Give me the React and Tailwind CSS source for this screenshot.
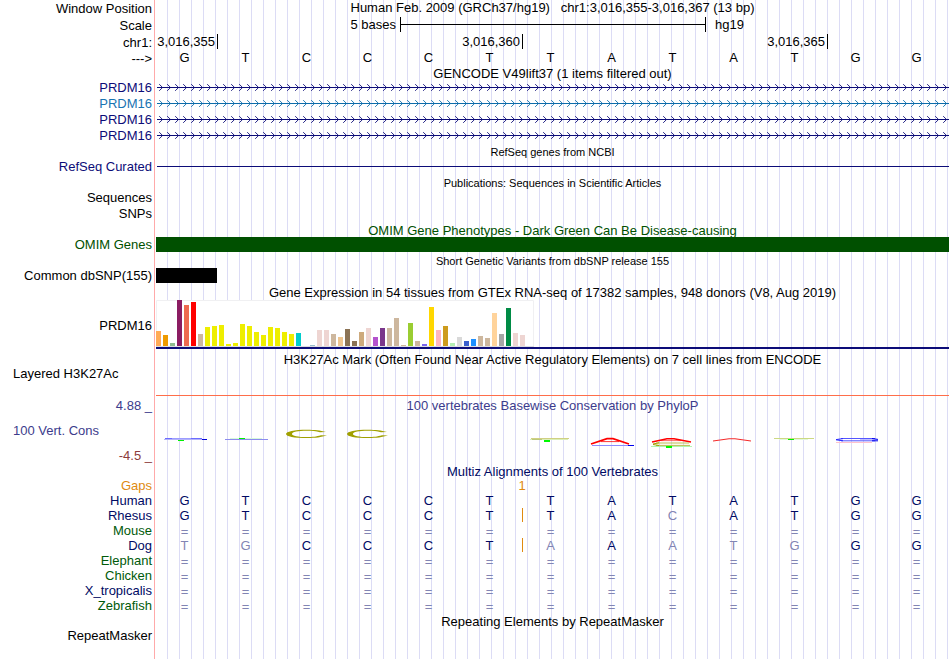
import React from "react";

const GRID =
  "bg-[linear-gradient(to_right,transparent_11px,#dcdcf5_11px)] bg-size-[12px_100%]";

function Row({ label, labelClass = "", className = "h-[15px]", children }) {
  return (
    <div className={`flex ${className}`}>
      <div
        className={`flex w-[155px] shrink-0 items-center justify-end border-r border-[#ffaaaa] pr-[2px] whitespace-pre ${labelClass}`}
      >
        {label}
      </div>
      <div className={`mx-px min-w-0 flex-1 ${GRID}`}>{children}</div>
    </div>
  );
}

function Title({ children, className = "", height = "h-4", small = false, label }) {
  return (
    <Row className={height} label={label}>
      <h2
        className={`flex h-full items-center justify-center whitespace-pre ${
          small ? "pt-[2px] text-[11px]" : ""
        } ${className}`}
      >
        {children}
      </h2>
    </Row>
  );
}

function Bases({ seq, className = "", match = "", insertAt = -1 }) {
  return (
    <div className={`grid h-full grid-cols-13 ${className}`}>
      {seq.split("").map((base, i) => {
        const dim = match && base !== match[i];
        return (
          <div key={i} className="flex items-center">
            {i === insertAt && (
              <span className="-mr-px h-[14px] w-px self-start bg-[#e08a10]" />
            )}
            <span
              className={`flex-1 pr-1 text-center ${dim ? "text-[#8285b4]" : ""} ${
                base === "=" ? "pt-[2px] leading-[13px]" : ""
              }`}
            >
              {base}
            </span>
          </div>
        );
      })}
    </div>
  );
}

function Transcript({ id, color }) {
  return (
    <svg className="block h-4 w-full" aria-hidden="true">
      <defs>
        <pattern id={id} width="8" height="16" patternUnits="userSpaceOnUse">
          <path d="M3.2 4.2L6.6 7.5L3.2 10.8" fill="none" stroke={color} strokeWidth="0.9" />
        </pattern>
      </defs>
      <rect width="100%" height="16" fill={`url(#${id})`} />
      <rect x="1" y="7" width="100%" height="1" fill={color} />
    </svg>
  );
}

const transcripts = [
  { color: "#0c0c78", text: "text-[#0c0c78]" },
  { color: "#0c6caa", text: "text-[#1874b2]" },
  { color: "#0c0c78", text: "text-[#0c0c78]" },
  { color: "#0c0c78", text: "text-[#0c0c78]" },
];

const tissues = [
  [15, "#ffaa56"], [11, "#ee9a00"], [3, "#8fbc8f"], [46, "#8b1c62"], [41, "#ee6a50"],
  [44, "#ff0000"], [12, "#cdb79e"], [19, "#eeee00"], [20, "#eeee00"], [21, "#eeee00"],
  [2, "#eeee00"], [3, "#eeee00"], [22, "#eeee00"], [20, "#eeee00"], [14, "#eeee00"],
  [11, "#eeee00"], [19, "#eeee00"], [18, "#eeee00"], [14, "#eeee00"], [12, "#eeee00"],
  [13, "#00cdcd"], [0, "#ee82ee"], [1, "#9ac0cd"], [16, "#eed5d2"], [16, "#eed5d2"],
  [12, "#cdb79e"], [9, "#eec591"], [17, "#8b7355"], [5, "#8b7355"], [14, "#cdaa7d"],
  [18, "#eed5d2"], [9, "#b452cd"], [18, "#7a378b"], [18, "#cdb79e"], [28, "#cdb79e"],
  [1, "#cdb79e"], [23, "#9acd32"], [5, "#cdb79e"], [2, "#7a67ee"], [39, "#ffd700"],
  [16, "#ffb6c1"], [20, "#cd9b1d"], [3, "#b4eeb4"], [9, "#d9d9d9"], [5, "#3a5fcd"],
  [7, "#1e90ff"], [10, "#cdb79e"], [8, "#cdb79e"], [33, "#ffd39b"], [12, "#a6a6a6"],
  [38, "#008b45"], [13, "#eed5d2"], [11, "#eed5d2"], [0, "#ff00ff"],
];

function ExpressionChart() {
  return (
    <svg className="block h-[47px] w-[378px]" viewBox="0 0 378 47" aria-hidden="true">
      <rect width="378" height="47" fill="#fff" />
      <path d="M0.5 46V0.5H377.5V46" fill="none" stroke="#f0f0f2" />
      <rect y="46" width="378" height="1" fill="#dcdce0" />
      {tissues.map(([h, color], i) => (
        <rect key={i} x={i * 7} y={46 - h} width="5" height={h} fill={color} />
      ))}
    </svg>
  );
}

function ConservationLogo() {
  return (
    <svg className="block h-[50px] w-full" viewBox="0 0 793 50" aria-hidden="true" fill="none">
      <path d="M9 24.5H46" stroke="#9c9cff" />
      <path d="M8 25.5H47" stroke="#b4b4fa" />
      <path d="M9 24.5H16M35 24.5H46" stroke="#6c6cff" />
      <path d="M46 25.5H51" stroke="#0000d8" />
      <rect x="22" y="26" width="6" height="1" fill="#00f000" />

      <path d="M69 25.5H112" stroke="#8c8cee" />
      <path d="M74 24.5H106" stroke="#d5f8dc" />
      <rect x="83" y="24" width="6" height="1" fill="#00f000" />

      {[0, 61].map((dx) => (
        <g key={dx} fill="#a0a000">
          <path
            d={`M${170 + dx} 18C${164 + dx} 16.4 ${159 + dx} 15.7 ${151 + dx} 15.7C${138 + dx} 15.7 ${130 + dx} 17.6 ${130 + dx} 20C${130 + dx} 22.4 ${138 + dx} 24.1 ${151 + dx} 24.1C${160 + dx} 24.1 ${165 + dx} 23.3 ${171 + dx} 21.6L${165 + dx} 21.3C${160 + dx} 22.6 ${157 + dx} 23.1 ${151 + dx} 23.1C${142 + dx} 23.1 ${136 + dx} 21.9 ${136 + dx} 20C${136 + dx} 18 ${142 + dx} 16.8 ${151 + dx} 16.8C${156 + dx} 16.8 ${160 + dx} 17.2 ${164 + dx} 18.3Z`}
          />
        </g>
      ))}

      <path d="M375 24.5H413" stroke="#d0d083" />
      <path d="M374 25.5H412" stroke="#dcefb8" />
      <path d="M376 25.5H386" stroke="#bcc87c" />
      <rect x="388" y="26" width="6" height="2" fill="#00f800" />

      <path d="M435 30L451 24.7H457L473 30" stroke="#ff0000" strokeWidth="1.8" />
      <path d="M445 27.6H463" stroke="#ff0000" strokeWidth="0.8" />
      <path d="M436 31.5H474" stroke="#8c8cff" />
      <path d="M472 31.5H478" stroke="#0000f0" />

      <path d="M496 28L511 24.7H518L535 28" stroke="#ff0000" strokeWidth="1.4" />
      <path d="M505 26.6H525" stroke="#ff0000" strokeWidth="0.6" />
      <path d="M500 29H533M500 31.4H534" stroke="#bcbc50" />
      <path d="M497 30L503 28.8M497 30.5L503 31.5" stroke="#a0a000" />
      <path d="M495 32.5H536" stroke="#b0f6b0" />
      <rect x="510" y="32" width="6" height="2" fill="#00f800" />

      <path d="M557 27L573 24.8H579L595 27" stroke="#f42c2c" strokeWidth="1.1" />

      <path d="M618 24.5H658" stroke="#ccd983" />
      <path d="M623 25.5H652" stroke="#e3f7dc" />
      <rect x="632" y="25" width="6" height="1" fill="#00f000" />

      <path d="M685 24.5H719M685 26.8H719" stroke="#5555ff" />
      <path d="M680 25.6L687 24.6M680 25.8L687 26.8" stroke="#2828ff" />
      <path d="M704 25.6H721" stroke="#aaaaff" strokeWidth="0.8" />
      <path d="M716 24.5L722 25.4M716 26.8H722" stroke="#0000f0" />
      <path d="M680 28.5H716" stroke="#ffc2cd" />
    </svg>
  );
}

const human = "GTCCCTTATATGG";
const gapLine = "=============";

const species = [
  { name: "Human", seq: human },
  { name: "Rhesus", seq: "GTCCCTTACATGG", insertAt: 6 },
  { name: "Mouse", seq: gapLine, green: true },
  { name: "Dog", seq: "TGCCCTAAATGGG", insertAt: 6 },
  { name: "Elephant", seq: gapLine, green: true },
  { name: "Chicken", seq: gapLine, green: true },
  { name: "X_tropicalis", seq: gapLine },
  { name: "Zebrafish", seq: gapLine, green: true },
];

function Tick({ children, className }) {
  return (
    <div
      className={`-mr-px flex h-[15px] items-center justify-end border-r border-black pr-[2px] whitespace-nowrap ${className}`}
    >
      {children}
    </div>
  );
}

export default function App() {
  return (
    <main className="flex min-h-screen flex-col overflow-hidden bg-white font-['Liberation_Sans',Arial,sans-serif] text-[13px] leading-[15px] text-black">
      <Row label="Window Position" className="h-[17px]">
        <h1 className="flex h-[15px] items-center justify-center whitespace-pre">
          {"Human Feb. 2009 (GRCh37/hg19)   chr1:3,016,355-3,016,367 (13 bp)"}
        </h1>
      </Row>
      <Row label="Scale" className="h-[17px]">
        <div className="grid h-[15px] grid-cols-13 items-center">
          <span className="col-span-2 col-start-3 pr-1 text-right">5 bases</span>
          <span className="col-span-5 -mr-px flex h-full items-center border-x border-black">
            <span className="h-px flex-1 bg-black" />
          </span>
          <span className="col-span-2 pl-[10px]">hg19</span>
        </div>
      </Row>
      <Row label="chr1:" className="h-4">
        <div className="grid h-full grid-cols-13">
          <Tick className="col-start-1">3,016,355</Tick>
          <Tick className="col-start-6">3,016,360</Tick>
          <Tick className="col-start-11">3,016,365</Tick>
        </div>
      </Row>
      <Row label="--->" className="h-4">
        <Bases seq={human} className="pb-[2px]" />
      </Row>

      <Title height="h-[14px]">GENCODE V49lift37 (1 items filtered out)</Title>
      {transcripts.map((t, i) => (
        <Row key={i} label="PRDM16" labelClass={`pb-[2px] ${t.text}`} className="h-4">
          <Transcript id={`strand-${i}`} color={t.color} />
        </Row>
      ))}

      <Title small height="h-[15px]">RefSeq genes from NCBI</Title>
      <Row label="RefSeq Curated" labelClass="text-[#0c0c78]">
        <div className="flex h-full items-center pl-px">
          <div className="h-px flex-1 bg-[#0c0c78]" />
        </div>
      </Row>

      <Title small>Publications: Sequences in Scientific Articles</Title>
      <Row label="Sequences" labelClass="pb-[2px]" className="h-4" />
      <Row label="SNPs" labelClass="pb-[2px]" className="h-4" />

      <Title height="h-[15px]" className="pt-[2px] text-[#005000]">
        OMIM Gene Phenotypes - Dark Green Can Be Disease-causing
      </Title>
      <Row label="OMIM Genes" labelClass="text-[#005000]">
        <div className="h-full bg-[#005000]" />
      </Row>

      <Title small>Short Genetic Variants from dbSNP release 155</Title>
      <Row label="Common dbSNP(155)">
        <div className="grid h-full grid-cols-13">
          <div className="bg-black" />
        </div>
      </Row>

      <Title height="h-[17px]" className="pt-[2px]">
        Gene Expression in 54 tissues from GTEx RNA-seq of 17382 samples, 948 donors (V8, Aug 2019)
      </Title>
      <Row label="PRDM16" labelClass="pt-[2px]" className="h-[49px]">
        <ExpressionChart />
        <div className="h-[2px] bg-[#0c0c78]" />
      </Row>

      <Title height="h-[17px]" className="pt-1">
        H3K27Ac Mark (Often Found Near Active Regulatory Elements) on 7 cell lines from ENCODE
      </Title>
      <div className="flex h-[30px]">
        <div className="w-[155px] shrink-0 border-r border-[#ffaaaa] pl-[13px]">Layered H3K27Ac</div>
        <div className={`mx-px flex-1 border-b border-[#ff6e4a] ${GRID}`} />
      </div>

      <div className="flex h-[68px]">
        <div className="flex w-[155px] shrink-0 flex-col justify-between border-r border-[#ffaaaa] pt-[2px] pr-[2px] pb-px text-right text-[#3c3c8c]">
          <span>4.88 _</span>
          <span className="pl-[13px] text-left">100 Vert. Cons</span>
          <span className="text-[#8c3c3c]">-4.5 _</span>
        </div>
        <div className={`mx-px flex-1 ${GRID}`}>
          <h2 className="h-[18px] pt-[2px] text-center text-[#3c3c8c]">
            100 vertebrates Basewise Conservation by PhyloP
          </h2>
          <ConservationLogo />
        </div>
      </div>

      <Title height="h-[14px]" className="text-[#000a64]">
        Multiz Alignments of 100 Vertebrates
      </Title>
      <Row label="Gaps" labelClass="text-[#e08a10]">
        <div className="grid h-full grid-cols-13 items-center text-[#e08a10]">
          <span className="col-span-2 col-start-6 text-center">1</span>
        </div>
      </Row>
      {species.map((s) => (
        <Row
          key={s.name}
          label={s.name}
          labelClass={s.green ? "text-[#005a0a]" : "text-[#000a64]"}
        >
          <Bases seq={s.seq} match={human} insertAt={s.insertAt} className="text-[#000a64]" />
        </Row>
      ))}

      <Title height="h-[15px]" className="pt-[2px]">Repeating Elements by RepeatMasker</Title>
      <Row label="RepeatMasker" />
      <Row className="flex-1" />
    </main>
  );
}
